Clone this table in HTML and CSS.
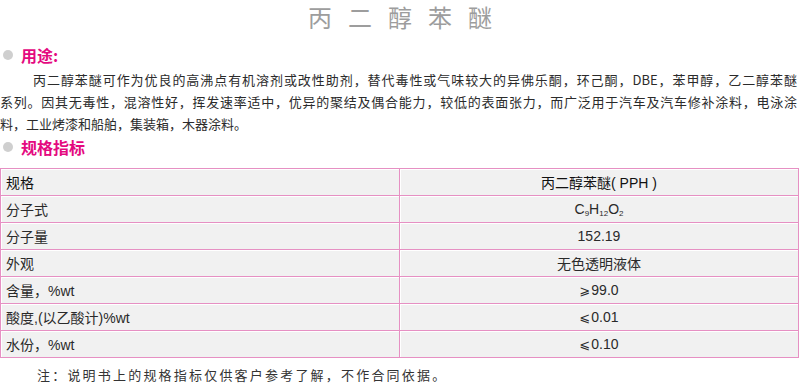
FILE: index.html
```html
<!DOCTYPE html>
<html lang="zh-CN">
<head>
<meta charset="utf-8">
<title>丙二醇苯醚</title>
<link rel="stylesheet" href="styles.css">
</head>
<body>
<div class="page">
  <h1 class="title">丙二醇苯醚</h1>

  <h2 class="section-head"><span class="dot"></span>用途:</h2>
  <p class="desc">
    <span class="ln first">丙二醇苯醚可作为优良的高沸点有机溶剂或改性助剂，替代毒性或气味较大的异佛乐酮，环己酮，DBE，苯甲醇，乙二醇苯醚</span>
    <span class="ln">系列。因其无毒性，混溶性好，挥发速率适中，优异的聚结及偶合能力，较低的表面张力，而广泛用于汽车及汽车修补涂料，电泳涂</span>
    <span class="ln last">料，工业烤漆和船舶，集装箱，木器涂料。</span>
  </p>

  <h2 class="section-head spec"><span class="dot"></span>规格指标</h2>
  <table class="spec-table">
    <tr class="head"><td>规格</td><td>丙二醇苯醚( PPH )</td></tr>
    <tr><td>分子式</td><td>C<sub>9</sub>H<sub>12</sub>O<sub>2</sub></td></tr>
    <tr><td>分子量</td><td>152.19</td></tr>
    <tr><td>外观</td><td>无色透明液体</td></tr>
    <tr><td>含量，%wt</td><td><span class="cmp">⩾</span>99.0</td></tr>
    <tr><td>酸度,(以乙酸计)%wt</td><td><span class="cmp">⩽</span>0.01</td></tr>
    <tr><td>水份，%wt</td><td><span class="cmp">⩽</span>0.10</td></tr>
  </table>

  <p class="note">注：说明书上的规格指标仅供客户参考了解，不作合同依据。</p>
</div>
</body>
</html>
```

FILE: styles.css
```css
html, body {
  margin: 0;
  padding: 0;
  background: #fff;
}

body {
  font-family: "Noto Sans CJK SC", "Noto Sans", sans-serif;
  color: #333;
}

.page {
  width: 800px;
}

.title {
  margin: 0;
  padding-left: 16px;
  font-size: 24px;
  font-weight: normal;
  line-height: 34px;
  letter-spacing: 16px;
  text-align: center;
  color: #9d9d9d;
}

.section-head {
  display: flex;
  align-items: center;
  gap: 8px;
  margin: 10px 0 0;
  padding-left: 3px;
  font-size: 16px;
  font-weight: bold;
  line-height: 22px;
  color: #e4097f;
}

.section-head.spec {
  margin-top: 1px;
}

.dot {
  width: 10px;
  height: 10px;
  border-radius: 50%;
  background: #cfcfcf;
}

.desc {
  margin: 3px 0 0;
  width: 797px;
  font-size: 13px;
  line-height: 22px;
  color: #2b2b2b;
}

.ln {
  display: block;
  text-align: justify;
  text-align-last: justify;
}

.ln.first {
  padding-left: 33px;
}

.ln.last {
  text-align-last: left;
}

.spec-table {
  margin-top: 10px;
  width: 799px;
  border-collapse: collapse;
  font-family: "Liberation Sans", "Noto Sans CJK SC", sans-serif;
  font-size: 14px;
  color: #2a2a2a;
}

.spec-table tr {
  height: 27px;
}

.spec-table td {
  width: 50%;
  padding: 0 5px;
  border: 1px solid #e690c3;
  background: #f1f1f1;
  box-shadow: inset 1px 1px 0 #fff;
  vertical-align: middle;
}

.spec-table td + td {
  text-align: center;
}

.spec-table .head td {
  color: #111;
}

.spec-table sub {
  font-size: 8px;
  vertical-align: -2px;
  line-height: 0;
}

.cmp {
  font-family: "DejaVu Sans", sans-serif;
  font-size: 13px;
  margin-right: 1px;
}

.note {
  margin: 7px 0 0;
  padding-left: 37px;
  font-size: 13px;
  line-height: 19px;
  letter-spacing: 2.2px;
  color: #333;
}
```
